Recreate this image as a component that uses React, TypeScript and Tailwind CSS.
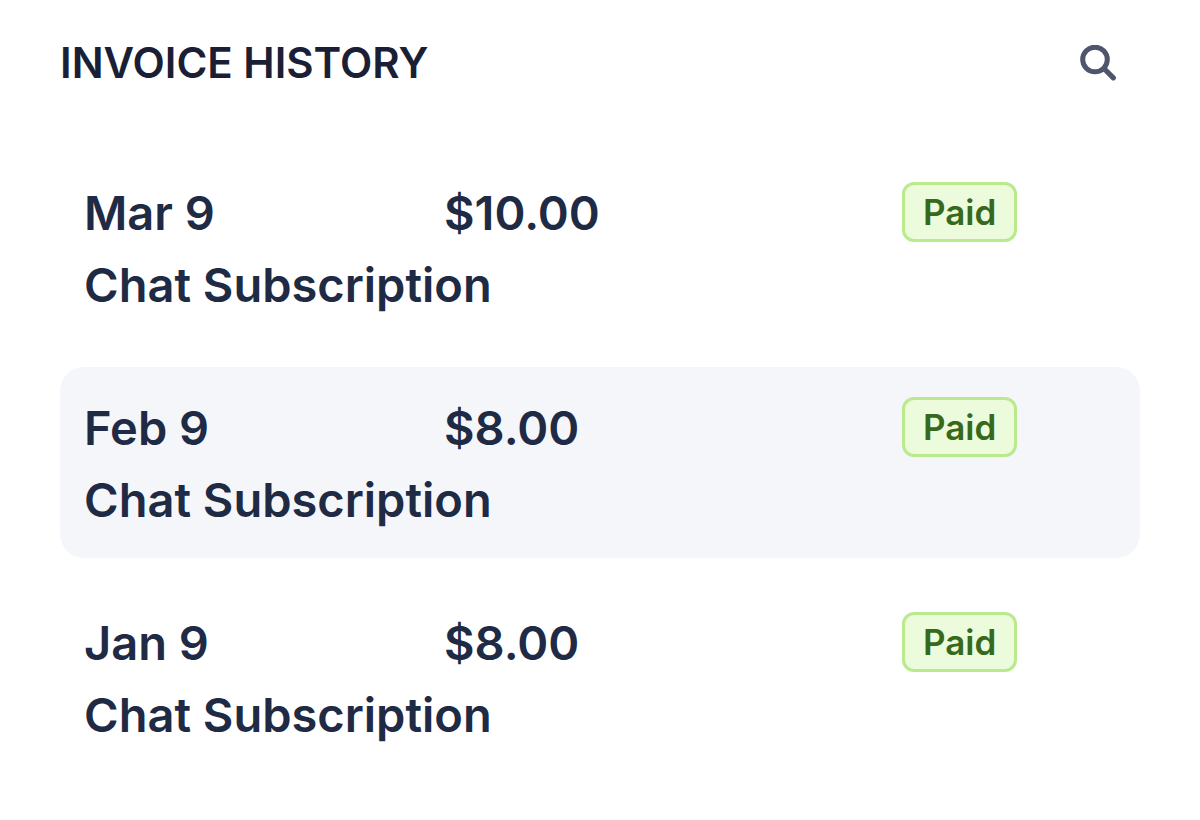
const invoices = [
  { date: "Mar 9", amount: "$10.00", status: "Paid", item: "Chat Subscription", active: false },
  { date: "Feb 9", amount: "$8.00", status: "Paid", item: "Chat Subscription", active: true },
  { date: "Jan 9", amount: "$8.00", status: "Paid", item: "Chat Subscription", active: false },
];

export default function App() {
  return (
    <main className="min-h-screen bg-white px-[60px] pt-[31px] font-['Inter',sans-serif] text-[#1f2a44]">
      <header className="flex items-center justify-between pr-6">
        <h1 className="text-[42px] leading-[64px] font-semibold text-[#1a1f36]">INVOICE HISTORY</h1>
        <button type="button" aria-label="Search invoices" className="text-[#4f566b]">
          <svg className="size-9" viewBox="0 0 36 36" fill="none" stroke="currentColor" strokeLinecap="round">
            <circle cx="15" cy="14.5" r="12.3" strokeWidth="5" />
            <path d="M24 23.5L33.3 32.8" strokeWidth="5.2" />
          </svg>
        </button>
      </header>
      <ul className="mt-[57px] flex flex-col gap-6">
        {invoices.map((invoice) => (
          <li
            key={invoice.date}
            className={`rounded-3xl pt-[25px] pb-[22px] text-[47px] leading-[72px] font-semibold ${invoice.active ? "bg-[#f4f6fa]" : ""}`}
          >
            <div className="grid grid-cols-3 items-center">
              <span className="pl-6">{invoice.date}</span>
              <span className="pl-6">{invoice.amount}</span>
              <span className="-mt-0.5 ml-[122px] justify-self-start rounded-xl border-3 border-[#b9ea8c] bg-[#ebfbdc] px-[18px] text-[35px] leading-[54px] text-[#37691d]">
                {invoice.status}
              </span>
            </div>
            <p className="pl-6">{invoice.item}</p>
          </li>
        ))}
      </ul>
    </main>
  );
}
